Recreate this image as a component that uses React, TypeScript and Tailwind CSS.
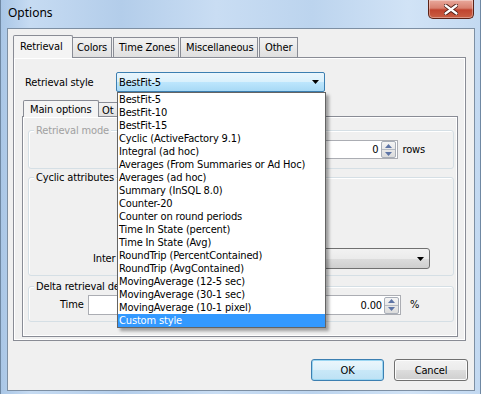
import React from "react";

const items = [
  "BestFit-5",
  "BestFit-10",
  "BestFit-15",
  "Cyclic (ActiveFactory 9.1)",
  "Integral (ad hoc)",
  "Averages (From Summaries or Ad Hoc)",
  "Averages (ad hoc)",
  "Summary (InSQL 8.0)",
  "Counter-20",
  "Counter on round periods",
  "Time In State (percent)",
  "Time In State (Avg)",
  "RoundTrip (PercentContained)",
  "RoundTrip (AvgContained)",
  "MovingAverage (12-5 sec)",
  "MovingAverage (30-1 sec)",
  "MovingAverage (10-1 pixel)",
  "Custom style",
];

function Arrow() {
  return (
    <svg width="7" height="4" viewBox="0 0 7 4">
      <path d="M0 0h7L3.5 4z" fill="#000" />
    </svg>
  );
}

function Spinner() {
  return (
    <div className="flex flex-col w-[15px] h-[17px] border border-[#a8aeb8] rounded-[2px] bg-gradient-to-b from-[#f4f4f4] to-[#dcdcdc]">
      <div className="flex-1 flex items-center justify-center border-b border-[#b5bac3]">
        <svg width="7" height="4" viewBox="0 0 7 4">
          <path d="M0 4L3.5 0L7 4z" fill="#5d74a6" />
        </svg>
      </div>
      <div className="flex-1 flex items-center justify-center">
        <svg width="7" height="4" viewBox="0 0 7 4">
          <path d="M0 0h7L3.5 4z" fill="#5d74a6" />
        </svg>
      </div>
    </div>
  );
}

function GroupLabel({ text, disabled }: { text: string; disabled?: boolean }) {
  return (
    <span
      className={
        "absolute -top-[7px] left-[5px] px-[2px] bg-[#f0f0f0] leading-[13px] whitespace-nowrap " +
        (disabled ? "text-[#a0a0a0]" : "text-black")
      }
    >
      {text}
    </span>
  );
}

export default function App() {
  return (
    <div className="relative w-[481px] h-[394px] overflow-hidden font-['Tahoma','DejaVu_Sans_Condensed','Liberation_Sans',sans-serif] text-[11px] tracking-[-0.15px] text-black bg-[linear-gradient(90deg,#a9c6e6_0%,#c6dbf2_6%,#b3cdea_25%,#c9ddf3_45%,#bcd4ee_65%,#d1e3f6_85%,#c3d9f1_100%)] border-x border-[#6f88a3]">
      {/* Title bar */}
      <div className="h-[27px] relative">
        <span className="absolute left-[7px] top-[5px] text-[12px] tracking-normal leading-[16px] font-['Noto_Sans','Open_Sans',sans-serif] text-black">
          Options
        </span>
        <div className="absolute left-[427px] top-0 w-[46px] h-[19px] rounded-b-[5px] border border-t-0 border-[#5b2217] bg-[linear-gradient(180deg,#e9a99c_0%,#d8806f_45%,#c0442f_55%,#c95f44_100%)] flex items-center justify-center shadow-[inset_0_0_0_1px_rgba(255,255,255,0.35)]">
          <svg width="14" height="11" viewBox="0 0 14 11">
            <path
              d="M1 1L13 10M13 1L1 10"
              stroke="#4a1a12"
              strokeWidth="4"
              strokeLinecap="round"
            />
            <path
              d="M1.5 1.5L12.5 9.5M12.5 1.5L1.5 9.5"
              stroke="#fff"
              strokeWidth="2.2"
              strokeLinecap="round"
            />
          </svg>
        </div>
      </div>

      {/* Client area */}
      <div className="ml-[6px] mt-[1px] w-[468px] h-[363px] border border-[#7d8fa3] bg-[#f0f0f0] px-[5px] pt-[6px] flex flex-col">
        {/* Tabs */}
        <div className="h-[23px] flex items-end relative z-10">
          <div className="w-[60px] h-[23px] border border-b-0 border-[#898c95] bg-[#f4f4f4] rounded-t-[2px] pl-[6px] pt-[4px] leading-[13px]">
            Retrieval
          </div>
          <div className="w-[39px] h-[21px] border border-l-0 border-[#898c95] bg-gradient-to-b from-[#f3f3f3] to-[#e0e0e0] pl-[4px] pt-[3px] leading-[13px]">
            Colors
          </div>
          <div className="ml-[1px] w-[66px] h-[21px] border border-[#898c95] bg-gradient-to-b from-[#f3f3f3] to-[#e0e0e0] pl-[5px] pt-[3px] leading-[13px]">
            Time Zones
          </div>
          <div className="ml-[1px] w-[78px] h-[21px] border border-[#898c95] bg-gradient-to-b from-[#f3f3f3] to-[#e0e0e0] pl-[5px] pt-[3px] leading-[13px]">
            Miscellaneous
          </div>
          <div className="ml-[1px] w-[39px] h-[21px] border border-[#898c95] bg-gradient-to-b from-[#f3f3f3] to-[#e0e0e0] pl-[5px] pt-[3px] leading-[13px]">
            Other
          </div>
        </div>

        {/* Tab panel */}
        <div className="-mt-px w-[453px] h-[284px] border border-[#898c95] bg-[#f0f0f0] shadow-[inset_1px_1px_0_#fff,inset_-1px_-1px_0_#fff] pl-[11px] pt-[14px] flex flex-col">
          <div className="flex items-center h-[20px]">
            <span className="w-[91px] leading-[13px]">Retrieval style</span>
            <div className="w-[209px] h-[20px] rounded-[2px] border border-[#3c7fb1] bg-[linear-gradient(180deg,#eaf6fd_0%,#d9f0fc_50%,#bee6fd_50%,#a7d9f5_100%)] flex items-center justify-between pl-[2px] pr-[5px]">
              <span className="leading-[13px]">BestFit-5</span>
              <Arrow />
            </div>
          </div>

          {/* Inner tabs */}
          <div className="mt-[8px] -ml-[3px] flex flex-col">
            <div className="h-[17px] flex items-end relative z-10 pl-[1px]">
              <div className="w-[76px] h-[17px] border border-b-0 border-[#898c95] bg-[#f4f4f4] rounded-t-[2px] pl-[6px] pt-[2px] leading-[13px]">
                Main options
              </div>
              <div className="w-[30px] h-[15px] border border-l-0 border-[#898c95] bg-gradient-to-b from-[#f3f3f3] to-[#e0e0e0] pl-[3px] pt-[1px] leading-[13px] whitespace-nowrap">
                Ot
              </div>
            </div>
            <div className="-mt-px w-[436px] h-[221px] border border-[#898c95] bg-[#f0f0f0] shadow-[inset_1px_1px_0_#fff,inset_-1px_-1px_0_#fff] pl-[5px] pt-[13px] flex flex-col">
              {/* Retrieval mode */}
              <div className="relative w-[426px] h-[39px] rounded-[3px] border border-[#d5dfe5] shadow-[inset_1px_1px_0_#fff] flex items-center justify-end pr-[28px]">
                <GroupLabel text="Retrieval mode" disabled />
                <div className="flex items-center">
                  <div className="w-[180px] h-[19px] border border-[#abadb3] bg-white flex items-center justify-end pr-px">
                    <span className="leading-[13px] pr-[3px]">0</span>
                    <Spinner />
                  </div>
                  <span className="ml-[4px] leading-[13px]">rows</span>
                </div>
              </div>

              {/* Cyclic attributes */}
              <div className="relative mt-[8px] w-[426px] h-[99px] rounded-[3px] border border-[#d5dfe5] shadow-[inset_1px_1px_0_#fff] flex flex-col justify-end pb-[6px]">
                <GroupLabel text="Cyclic attributes" />
                <div className="flex items-center">
                  <div className="ml-[64px] w-[46px] leading-[13px] whitespace-nowrap">Inter</div>
                  <div className="w-[291px] h-[21px] rounded-[3px] border border-[#707070] bg-[linear-gradient(180deg,#f2f2f2_0%,#ebebeb_50%,#dddddd_50%,#cfcfcf_100%)] flex items-center justify-end pr-[5px]">
                    <Arrow />
                  </div>
                </div>
              </div>

              {/* Delta retrieval */}
              <div className="relative mt-[10px] w-[426px] h-[36px] rounded-[3px] border border-[#d5dfe5] shadow-[inset_1px_1px_0_#fff] flex items-center">
                <GroupLabel text="Delta retrieval de" />
                <span className="ml-[31px] w-[28px] leading-[13px]">Time</span>
                <div className="w-[313px] h-[20px] mt-[2px] border border-[#abadb3] bg-white flex items-center justify-end pr-px">
                  <span className="leading-[13px] pr-[2px]">0.00</span>
                  <Spinner />
                </div>
                <span className="ml-[9px] leading-[13px]">%</span>
              </div>
            </div>
          </div>
        </div>

        {/* Buttons */}
        <div className="mt-[18px] w-[455px] flex justify-end gap-[10px]">
          <div className="w-[73px] h-[22px] rounded-[3px] border border-[#3c7fb1] bg-[linear-gradient(180deg,#ebf6fc_0%,#dcf0fa_50%,#c9e8f8_50%,#bde1f4_100%)] shadow-[inset_0_0_0_1px_#9ad6f2] flex items-center justify-center leading-[13px]">
            OK
          </div>
          <div className="w-[74px] h-[22px] rounded-[3px] border border-[#707070] bg-[linear-gradient(180deg,#f2f2f2_0%,#ebebeb_50%,#dddddd_50%,#cfcfcf_100%)] shadow-[inset_0_0_0_1px_#fcfcfc] flex items-center justify-center leading-[13px]">
            Cancel
          </div>
        </div>
      </div>

      {/* Dropdown list overlay */}
      <div className="absolute left-[116px] top-[92px] w-[209px] h-[236px] border border-[#646464] bg-white shadow-[3px_3px_3px_rgba(0,0,0,0.35)] z-20 flex flex-col">
        {items.map((it) => (
          <div
            key={it}
            className={
              "h-[13px] leading-[13px] pl-[1px] whitespace-nowrap overflow-hidden " +
              (it === "Custom style" ? "bg-[#3399ff] text-white" : "text-black")
            }
          >
            {it}
          </div>
        ))}
      </div>
    </div>
  );
}
